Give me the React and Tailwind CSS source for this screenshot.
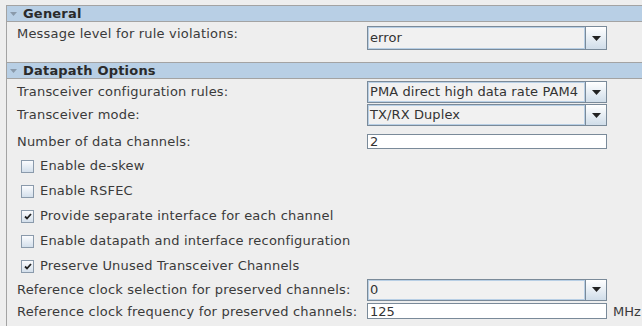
import React from 'react';

const font = { fontFamily: '"DejaVu Sans", sans-serif' };

function Arrow() {
  return (
    <svg width="9" height="5" viewBox="0 0 9 5">
      <path d="M0 0 L9 0 L4.5 5 Z" fill="#222" />
    </svg>
  );
}

function Combo({ value, className = '' }) {
  return (
    <div className={`flex w-[240px] border border-[#7a8a99] bg-[#eeeeee] ${className}`}>
      <div className="flex flex-1 items-center border border-[#b8cfe5] bg-[#f1f1f1] pl-[1px] text-[13px] tracking-[0.1px] text-[#333]">
        {value}
      </div>
      <div className="flex w-[21px] items-center justify-center border-l border-[#7a8a99] bg-gradient-to-b from-[#ffffff] to-[#d0dde9]">
        <Arrow />
      </div>
    </div>
  );
}

function Field({ value, className = '' }) {
  return (
    <div className={`flex w-[240px] items-center border border-[#7a8a99] bg-white pl-[2px] text-[13px] text-[#333] ${className}`}>
      {value}
    </div>
  );
}

function Check({ checked, label }) {
  return (
    <div className="flex h-[25px] items-center pl-[14px] text-[13px] tracking-[0.2px] text-[#3a3a3a]">
      <div className="mr-[6px] flex h-[13px] w-[13px] items-center justify-center border border-[#8a9aab] bg-gradient-to-b from-[#fbfcfe] to-[#d3dfeb]">
        {checked && (
          <svg width="8" height="7" viewBox="0 0 8 7">
            <path d="M1 3.5 L3 5.5 L7 1" stroke="#222" strokeWidth="1.8" fill="none" />
          </svg>
        )}
      </div>
      {label}
    </div>
  );
}

function Header({ title }) {
  return (
    <div className="flex h-[16px] items-center border-b border-[#a3a3a3] bg-[#b8cfe5] pl-[3px]">
      <svg width="7" height="4" viewBox="0 0 7 4" className="mr-[6px]">
        <path d="M0 0 L7 0 L3.5 4 Z" fill="#8a9aab" />
      </svg>
      <span className="text-[13px] font-bold leading-[15px] tracking-[0.2px] text-[#2a2a2a]">{title}</span>
    </div>
  );
}

function Row({ label, children, className = '', labelClass = '' }) {
  return (
    <div className={`flex items-center ${className}`}>
      <div className={`w-[360px] pl-[10px] text-[13px] tracking-[0.2px] text-[#3a3a3a] ${labelClass}`}>{label}</div>
      {children}
    </div>
  );
}

export default function App() {
  return (
    <div className="h-[326px] w-[642px] overflow-hidden bg-[#eeeeee] pl-[6px] pt-[5px]" style={font}>
      <div className="h-full border-l border-t border-[#a3a3a3]">
        <Header title="General" />
        <div className="h-[40px] pt-[4px]">
          <Row label="Message level for rule violations:" className="!items-start" labelClass="leading-[15px]">
            <Combo value="error" className="h-[24px]" />
          </Row>
        </div>
        <div className="border-t border-[#a3a3a3]">
          <Header title="Datapath Options" />
        </div>
        <div className="pt-[2px]">
          <Row label="Transceiver configuration rules:">
            <Combo value="PMA direct high data rate PAM4" className="h-[22px]" />
          </Row>
          <Row label="Transceiver mode:" className="mt-[1px]">
            <Combo value="TX/RX Duplex" className="h-[22px]" />
          </Row>
          <Row label="Number of data channels:" className="mt-[6px]">
            <Field value="2" className="h-[15px]" />
          </Row>
          <div className="mt-[2px]">
            <Check label="Enable de-skew" />
            <Check label="Enable RSFEC" />
            <Check checked label="Provide separate interface for each channel" />
            <Check label="Enable datapath and interface reconfiguration" />
            <Check checked label="Preserve Unused Transceiver Channels" />
          </div>
          <Row label="Reference clock selection for preserved channels:">
            <Combo value="0" className="h-[22px]" />
          </Row>
          <Row label="Reference clock frequency for preserved channels:" className="mt-[1px]">
            <Field value="125" className="h-[16px]" />
            <span className="ml-[6px] text-[13px] text-[#3a3a3a]">MHz</span>
          </Row>
        </div>
      </div>
    </div>
  );
}
